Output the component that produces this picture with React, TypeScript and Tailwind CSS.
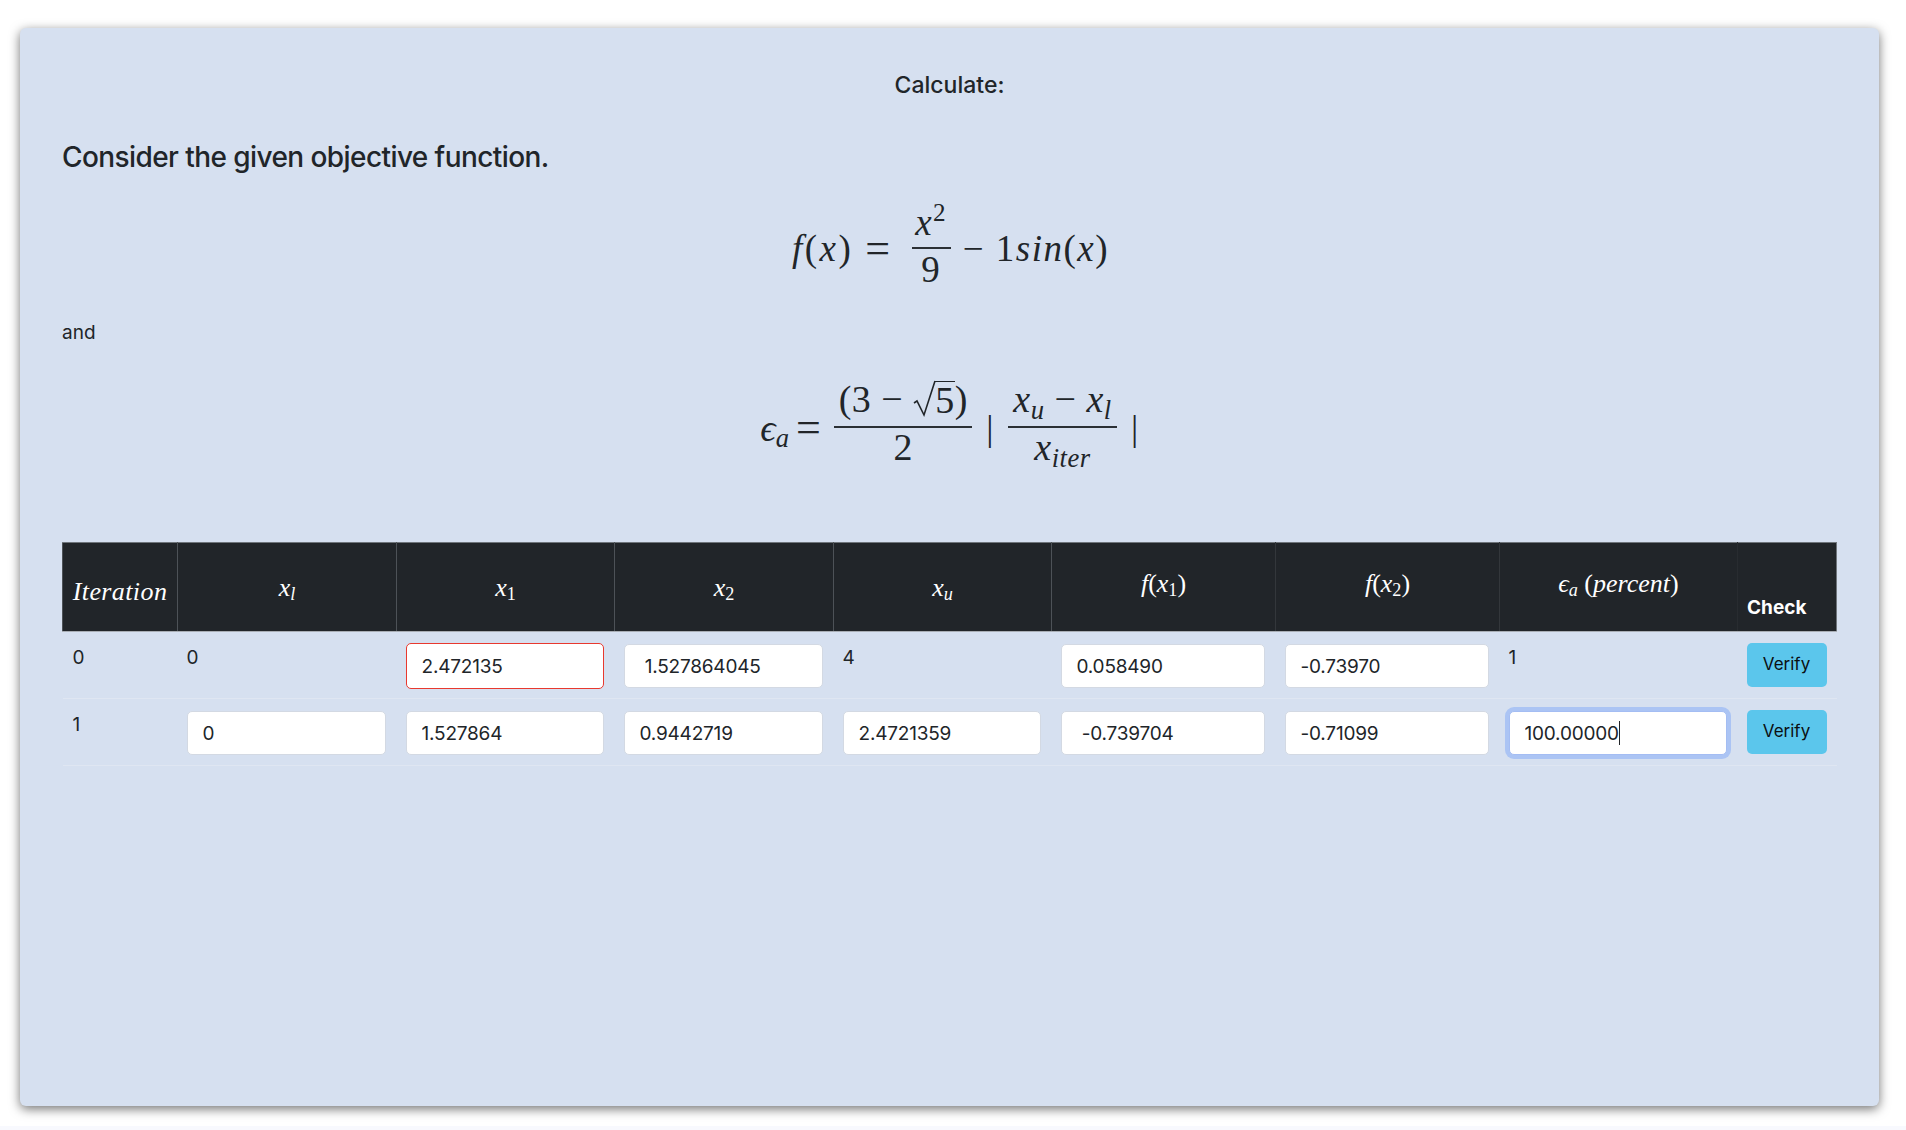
import { ReactNode } from 'react'

const mathFont = "[font-family:'Liberation_Serif',serif]"

// italic math letters with an optional subscript
function MathVar({ name, sub }: { name: string; sub?: string }) {
  return (
    <span className="italic">
      {name}
      {sub && <sub className="text-[0.7em] align-baseline relative top-[0.25em]">{sub}</sub>}
    </span>
  )
}

function Frac({ top, bottom, width }: { top: ReactNode; bottom: ReactNode; width: string }) {
  return (
    <span className={`inline-flex flex-col items-center pb-[18px] ${width}`}>
      <span className="h-[54px] pb-[8px] flex items-end whitespace-nowrap leading-[38px]">{top}</span>
      <span className="w-full h-[2px] bg-[#2b3035]" />
      <span className="h-[38px] flex items-end whitespace-nowrap leading-[38px]">{bottom}</span>
    </span>
  )
}

function Sqrt5() {
  return (
    <span className="inline-flex items-end ml-[10px]">
      <svg width="23" height="38" viewBox="0 0 23 38" className="-mr-px">
        <path d="M1 23 L4 21 L11 35 L22 1" fill="none" stroke="#212529" strokeWidth="1.6" />
      </svg>
      <span className="border-t-[1.5px] border-[#212529] leading-[36px] h-[37px]">5</span>
    </span>
  )
}

function Field({ value, invalid, focused }: { value: string; invalid?: boolean; focused?: boolean }) {
  let state = 'border-[#d3d9e3]'
  if (invalid) state = 'border-[#e8392f] h-[46px] -mt-px'
  if (focused) state = 'border-[#a4bdf3] shadow-[0_0_0_4px_#abc4f4]'
  return (
    <div className="relative">
      <input
        readOnly
        value={value}
        className={`block w-full h-[44px] rounded-[5px] border bg-white px-[15px] text-[19px] tracking-[-0.2px] text-[#212529] outline-none ${state}`}
      />
      {focused && <span className="absolute left-[110px] top-[10px] w-px h-[24px] bg-[#212529]" />}
    </div>
  )
}

function VerifyButton() {
  return (
    <button className="w-[80px] h-[44px] rounded-[5px] bg-[#5bc6ec] text-[17px] text-[#0b0f12]">Verify</button>
  )
}

const widths = [115, 219, 218, 219, 218, 224, 224, 238, 99]

export default function App() {
  return (
    <div className="bg-white font-['Inter',sans-serif] text-[#212529]">
      <div className="h-[1126px] pt-[28px] pl-[20px]">
        <div className="w-[1859px] h-[1078px] rounded-[6px] bg-[#d6e0f0] shadow-[0_3px_11px_rgba(0,0,0,0.55)] pt-[43px] px-[42px]">
          <h3 className="text-center text-[23px] font-medium leading-[28px]">Calculate:</h3>

          <h2 className="mt-[40px] text-[28px] font-medium leading-[36px] tracking-[-0.58px]">
            Consider the given objective function.
          </h2>

          <div className={`mt-[18px] pl-[2px] flex justify-center items-center text-[37px] tracking-[1.5px] ${mathFont}`}>
            <span className="tracking-[2.5px]"><MathVar name="f" />(<MathVar name="x" />)</span>
            <span className="ml-[12px] text-[44px] leading-none">=</span>
            <span className="ml-[20px] mr-[12px]">
              <Frac
                width="w-[39px]"
                top={<span className="-mb-[3px]"><span className="italic">x</span><sup className="text-[0.68em] relative -top-[0.55em] align-baseline">2</sup></span>}
                bottom={<span className="-mb-[2px]">9</span>}
              />
            </span>
            − 1<MathVar name="sin" />(<MathVar name="x" />)
          </div>

          <p className="mt-[14px] text-[19px] leading-[27px]">and</p>

          <div className={`mt-[26px] flex justify-center items-center text-[38px] tracking-[0.5px] ${mathFont}`}>
            <span className="tracking-normal"><MathVar name="ϵ" sub="a" /></span>
            <span className="ml-[7px] mr-[13px] text-[44px] leading-none">=</span>
            <Frac
              width="w-[138px]"
              top={<span className="flex items-end">(3 − <Sqrt5 />)</span>}
              bottom="2"
            />
            <span className="mx-[14px] text-[36px]">|</span>
            <Frac
              width="w-[109px]"
              top={<span><MathVar name="x" sub="u" /> − <MathVar name="x" sub="l" /></span>}
              bottom={<MathVar name="x" sub="iter" />}
            />
            <span className="ml-[14px] text-[36px]">|</span>
          </div>

          <table className="mt-[58px] w-[1774px] table-fixed border-collapse text-[19px]">
            <colgroup>
              {widths.map((w, i) => (
                <col key={i} style={{ width: w }} />
              ))}
            </colgroup>
            <thead>
              <tr className={`h-[89px] bg-[#212529] text-white font-normal text-[26px] ${mathFont}`}>
                <th className="font-normal border border-[#4d5257] border-t-[#6f757b] border-b-[#a9aeb5] pt-[8px]"><span className="italic tracking-[0.4px]">Iteration</span></th>
                <th className="font-normal border border-[#4d5257] border-t-[#6f757b] border-b-[#a9aeb5]"><MathVar name="x" sub="l" /></th>
                <th className="font-normal border border-[#4d5257] border-t-[#6f757b] border-b-[#a9aeb5]"><MathVar name="x" /><sub className="text-[0.7em] align-baseline relative top-[0.25em]">1</sub></th>
                <th className="font-normal border border-[#4d5257] border-t-[#6f757b] border-b-[#a9aeb5]"><MathVar name="x" /><sub className="text-[0.7em] align-baseline relative top-[0.25em]">2</sub></th>
                <th className="font-normal border border-[#4d5257] border-t-[#6f757b] border-b-[#a9aeb5]"><MathVar name="x" sub="u" /></th>
                <th className="font-normal border border-[#33373b] border-t-[#6f757b] border-b-[#a9aeb5] pb-[8px]"><MathVar name="f" />(<MathVar name="x" /><sub className="text-[0.7em] align-baseline relative top-[0.25em]">1</sub>)</th>
                <th className="font-normal border border-[#33373b] border-l-[#4d5257] border-t-[#6f757b] border-b-[#a9aeb5] pb-[8px]"><MathVar name="f" />(<MathVar name="x" /><sub className="text-[0.7em] align-baseline relative top-[0.25em]">2</sub>)</th>
                <th className="font-normal border border-[#33373b] border-r-[#282c30] border-t-[#6f757b] border-b-[#a9aeb5] pb-[8px]"><MathVar name="ϵ" sub="a" /> (<span className="italic">percent</span>)</th>
                <th className="border border-[#282c30] border-t-[#6f757b] border-b-[#a9aeb5] border-r-[#6f757b] align-bottom text-left pl-[9px] pb-[10px] font-['Inter',sans-serif] text-[19px] font-bold leading-[27px]">Check</th>
              </tr>
            </thead>
            <tbody>
              <tr className="border-b border-[#dfe6f2] align-top">
                <td className="p-[10px] pt-[12px]">0</td>
                <td className="pl-[9px] pr-[11px] pt-[12px] pb-[9px]">0</td>
                <td className="pl-[9px] pr-[11px] pt-[12px] pb-[9px]"><Field value="2.472135" invalid /></td>
                <td className="pl-[9px] pr-[11px] pt-[12px] pb-[9px]"><Field value=" 1.527864045" /></td>
                <td className="pl-[9px] pr-[11px] pt-[12px] pb-[9px]">4</td>
                <td className="pl-[9px] pr-[11px] pt-[12px] pb-[9px]"><Field value="0.058490" /></td>
                <td className="pl-[9px] pr-[11px] pt-[12px] pb-[9px]"><Field value="-0.73970" /></td>
                <td className="pl-[9px] pr-[11px] pt-[12px] pb-[9px]">1</td>
                <td className="pl-[9px] pt-[11px] pb-[9px]"><VerifyButton /></td>
              </tr>
              <tr className="border-b border-[#dfe6f2] align-top">
                <td className="p-[10px] pt-[12px]">1</td>
                <td className="pl-[9px] pr-[11px] pt-[12px] pb-[10px]"><Field value="0" /></td>
                <td className="pl-[9px] pr-[11px] pt-[12px] pb-[10px]"><Field value="1.527864" /></td>
                <td className="pl-[9px] pr-[11px] pt-[12px] pb-[10px]"><Field value="0.9442719" /></td>
                <td className="pl-[9px] pr-[11px] pt-[12px] pb-[10px]"><Field value="2.4721359" /></td>
                <td className="pl-[9px] pr-[11px] pt-[12px] pb-[10px]"><Field value=" -0.739704" /></td>
                <td className="pl-[9px] pr-[11px] pt-[12px] pb-[10px]"><Field value="-0.71099" /></td>
                <td className="pl-[9px] pr-[11px] pt-[12px] pb-[10px]"><Field value="100.00000" focused /></td>
                <td className="pl-[9px] pt-[11px] pb-[10px]"><VerifyButton /></td>
              </tr>
            </tbody>
          </table>
        </div>
      </div>
      <div className="h-[4px] bg-[#f8f9fe]" />
    </div>
  )
}
